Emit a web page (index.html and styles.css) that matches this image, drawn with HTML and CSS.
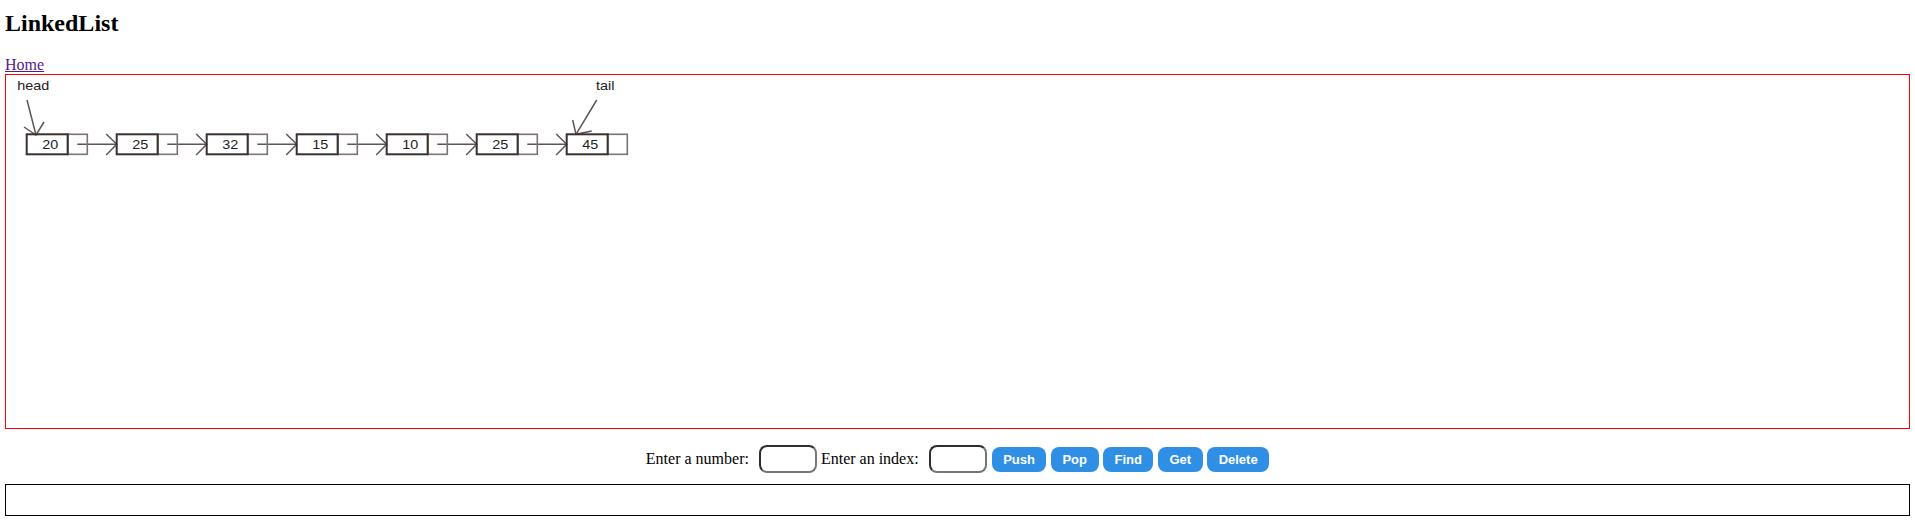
FILE: index.html
```html
<!DOCTYPE html>
<html>
<head>
<meta charset="utf-8">
<title>LinkedList</title>
<link rel="stylesheet" href="styles.css">
</head>
<body>
<div class="page">
  <h2 class="title">LinkedList</h2>
  <a class="home" href="#">Home</a>
  <div class="board">
    <svg class="diagram" width="1903" height="353" viewBox="0 0 1903 353">
      <g class="label-text">
        <text transform="translate(11.3 15) scale(1.2 1)">head</text>
        <text transform="translate(590 15) scale(1.2 1)">tail</text>
      </g>
      <g class="arrow">
        <line x1="21" y1="25" x2="30" y2="60"/>
        <polyline points="18,52 30,60 38,47"/>
        <line x1="590.7" y1="25" x2="570" y2="59.3"/>
        <polyline points="566.7,45 570,59.3 585.7,56"/>
      </g>
      <g class="links">
        <line x1="71.3" y1="69.3" x2="110.7" y2="69.3"/><polyline points="100.2,59 110.7,69.3 100.2,80"/>
        <line x1="161.3" y1="69.3" x2="200.7" y2="69.3"/><polyline points="190.2,59 200.7,69.3 190.2,80"/>
        <line x1="251.3" y1="69.3" x2="290.7" y2="69.3"/><polyline points="280.2,59 290.7,69.3 280.2,80"/>
        <line x1="341.3" y1="69.3" x2="380.7" y2="69.3"/><polyline points="370.2,59 380.7,69.3 370.2,80"/>
        <line x1="431.3" y1="69.3" x2="470.7" y2="69.3"/><polyline points="460.2,59 470.7,69.3 460.2,80"/>
        <line x1="521.3" y1="69.3" x2="560.7" y2="69.3"/><polyline points="550.2,59 560.7,69.3 550.2,80"/>
      </g>
      <g class="ptr-box">
        <rect x="61.7" y="59.3" width="19.6" height="20"/>
        <rect x="151.7" y="59.3" width="19.6" height="20"/>
        <rect x="241.7" y="59.3" width="19.6" height="20"/>
        <rect x="331.7" y="59.3" width="19.6" height="20"/>
        <rect x="421.7" y="59.3" width="19.6" height="20"/>
        <rect x="511.7" y="59.3" width="19.6" height="20"/>
        <rect x="601.7" y="59.3" width="19.6" height="20"/>
      </g>
      <g class="data-box">
        <rect x="20.7" y="59.3" width="41" height="20"/>
        <rect x="110.7" y="59.3" width="41" height="20"/>
        <rect x="200.7" y="59.3" width="41" height="20"/>
        <rect x="290.7" y="59.3" width="41" height="20"/>
        <rect x="380.7" y="59.3" width="41" height="20"/>
        <rect x="470.7" y="59.3" width="41" height="20"/>
        <rect x="560.7" y="59.3" width="41" height="20"/>
      </g>
      <g class="value-text">
        <text transform="translate(36.2 74.3) scale(1.2 1)">20</text>
        <text transform="translate(126.2 74.3) scale(1.2 1)">25</text>
        <text transform="translate(216.2 74.3) scale(1.2 1)">32</text>
        <text transform="translate(306.2 74.3) scale(1.2 1)">15</text>
        <text transform="translate(396.2 74.3) scale(1.2 1)">10</text>
        <text transform="translate(486.2 74.3) scale(1.2 1)">25</text>
        <text transform="translate(576.2 74.3) scale(1.2 1)">45</text>
      </g>
    </svg>
  </div>
  <div class="controls">
    <span class="label">Enter a number:</span>
    <input class="field" type="text">
    <span class="label">Enter an index:</span>
    <input class="field field-last" type="text">
    <button class="btn">Push</button>
    <button class="btn">Pop</button>
    <button class="btn">Find</button>
    <button class="btn">Get</button>
    <button class="btn btn-last">Delete</button>
  </div>
  <div class="output"></div>
</div>
</body>
</html>
```
FILE: styles.css
```css
html, body {
  margin: 0;
  padding: 0;
  background: #fff;
}

.page {
  padding: 10px 5px 0;
  font-family: "Liberation Serif", "Times New Roman", serif;
  font-size: 16px;
  color: #000;
}

.title {
  margin: 0 0 19px;
  font-size: 24px;
  font-weight: bold;
  line-height: normal;
}

.home {
  color: #551a8b;
  text-decoration: underline;
}

.board {
  border: 1px solid #ff0000;
  height: 353px;
  overflow: hidden;
}

.diagram {
  display: block;
}

.label-text text,
.value-text text {
  font-family: "Liberation Sans", Arial, sans-serif;
  font-size: 12px;
  fill: #222;
}

.arrow line,
.arrow polyline,
.links line,
.links polyline {
  fill: none;
  stroke: #5f5555;
  stroke-width: 1.5;
}

.ptr-box rect {
  fill: none;
  stroke: #7d7373;
  stroke-width: 1.6;
}

.data-box rect {
  fill: none;
  stroke: #3a3131;
  stroke-width: 2;
}

.controls {
  margin-top: 16px;
  height: 28px;
  display: flex;
  justify-content: center;
  align-items: center;
}

.label {
  margin-right: 10px;
  white-space: nowrap;
}

.field {
  box-sizing: border-box;
  width: 58px;
  height: 28px;
  margin: 0 4px 0 0;
  padding: 0;
  border: 2px solid;
  border-color: #2e2e2e #767676 #767676 #2e2e2e;
  border-radius: 8px;
  background: #fff;
  outline: none;
}

.field-last {
  margin-right: 5px;
}

.btn {
  box-sizing: border-box;
  height: 25px;
  margin: 0 4.5px 0 0;
  padding: 0 11.5px;
  border: none;
  border-radius: 8px;
  background: #2f8fe5;
  color: #fff;
  font-family: "Liberation Sans", Arial, sans-serif;
  font-size: 13px;
  font-weight: bold;
  line-height: 25px;
}

.btn-last {
  margin-right: 0;
}

.output {
  margin-top: 11px;
  height: 30px;
  border: 1px solid #000;
}
```
